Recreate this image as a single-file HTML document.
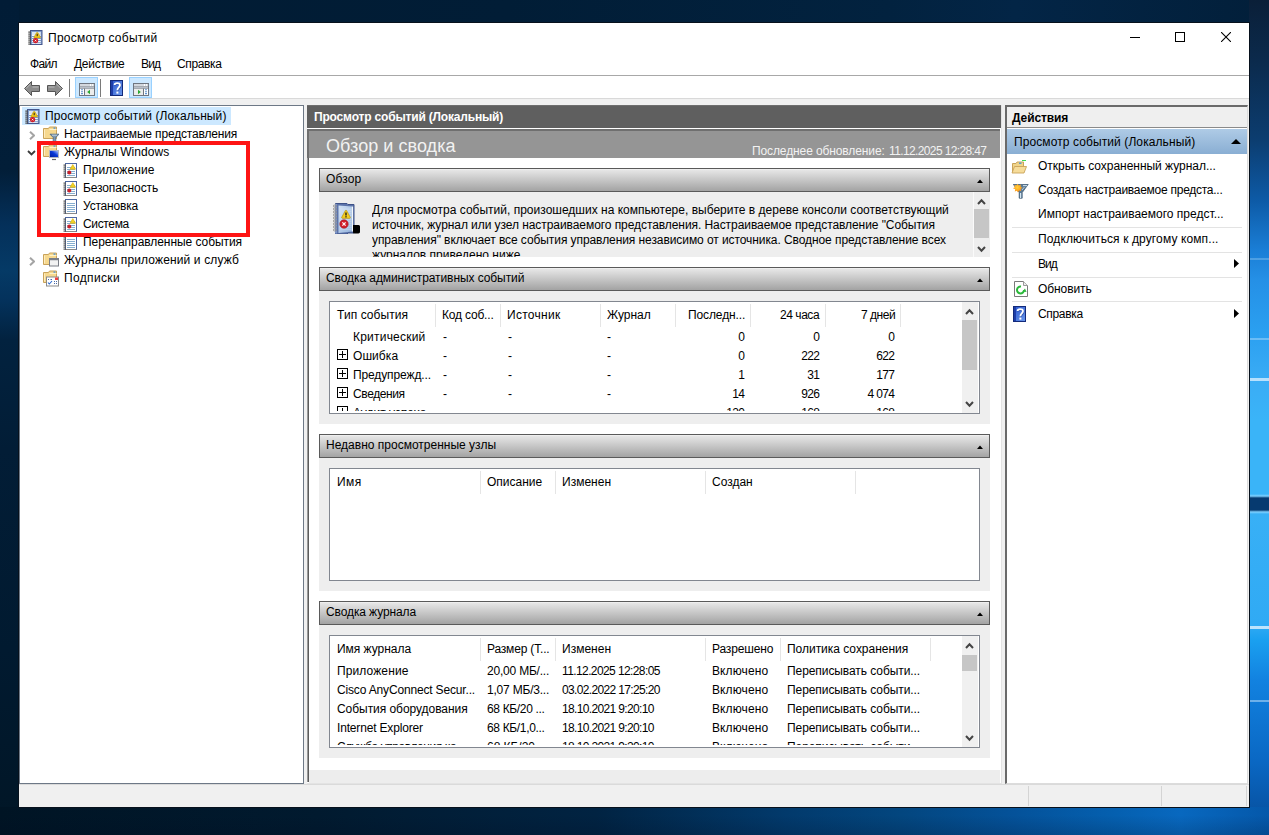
<!DOCTYPE html>
<html><head><meta charset="utf-8"><style>
*{box-sizing:border-box}
html,body{margin:0;padding:0;width:1269px;height:835px;overflow:hidden}
body{position:relative;font-family:"Liberation Sans",sans-serif;font-size:12px;color:#000;background:#021a31}
.a{position:absolute}
.t{position:absolute;white-space:nowrap;line-height:15px;font-size:12px}
.b{font-weight:bold}
.r{text-align:right}
.sh{left:319px;width:671px;height:24px;border:1px solid #5a5a5a;background:linear-gradient(180deg,#f7f7f7 0px,#e6e6e6 1px,#a3a3a3 100%)}
.sc{left:319px;width:671px;background:#eeeeee}
.lb{left:329px;width:651px;background:#fff;border:1px solid #828790}
.cs{width:1px;height:23px;background:#e5e5e5}
</style></head><body>
<div class="a" style="left:0;top:0;width:1269px;height:835px;background:linear-gradient(90deg,#011b33 0%,#011d36 40%,#02223f 70%,#032546 80%,#021f3a 100%)"></div>
<div class="a" style="left:0;top:0;width:19px;height:835px;background:linear-gradient(180deg,#011c36 0px,#021e38 170px,#04305a 225px,#053a66 270px,#04325c 300px,#02223f 340px,#021d36 450px,#011a30 650px,#011626 835px)"></div>
<div class="a" style="left:1249px;top:0;width:20px;height:835px;background:linear-gradient(180deg,#0a1f38 0px,#0b2a4c 60px,#0c3d70 140px,#0d5aa6 200px,#1a7ed6 250px,#2590e6 280px,#2a9ff0 330px,#3aacf5 380px,#3ab4f8 420px,#3ab4f8 494px,#7fd0ff 496px,#063a70 498px,#063a70 510px,#7fd0ff 512px,#38b0f6 514px,#30aaf4 625px,#1aa0f0 640px,#1282e0 680px,#0a68c4 760px,#064a96 835px)"></div>
<div class="a" style="left:1250px;top:338px;width:19px;height:2px;background:rgba(225,242,255,0.35)"></div>
<div class="a" style="left:1250px;top:378px;width:19px;height:3px;background:rgba(225,242,255,0.75)"></div>
<div class="a" style="left:1250px;top:626px;width:19px;height:3px;background:rgba(225,242,255,0.8)"></div>
<div class="a" style="left:1250px;top:700px;width:19px;height:2px;background:rgba(225,242,255,0.45)"></div>
<div class="a" style="left:1250px;top:258px;width:19px;height:2px;background:rgba(225,242,255,0.25)"></div>
<div class="a" style="left:0;top:807px;width:1269px;height:28px;background:linear-gradient(180deg,rgba(0,0,0,0) 30%,rgba(0,10,30,0.18) 100%),linear-gradient(90deg,#001424 0%,#011a2f 25%,#012342 47%,#023a6c 62%,#03467f 71%,#04529a 80%,#0560b0 88%,#0868bf 93%,#0558aa 100%)"></div>
<div class="a" style="left:18px;top:22px;width:1232px;height:786px;background:#fff;border:1px solid #07111c"></div>
<svg class="a" style="left:28px;top:30px" width="16" height="16" viewBox="0 0 16 16"><rect x="2.5" y="0.5" width="11.5" height="14" fill="#7e9ccc" stroke="#46588e"/><rect x="4" y="2" width="8.8" height="3" fill="#dce6f2"/><path d="M4 5.5H12.8" stroke="#f4f7fb" stroke-width="1"/><path d="M4 7.5H12.8" stroke="#f4f7fb" stroke-width="1"/><path d="M4 9.5H12.8" stroke="#f4f7fb" stroke-width="1"/><path d="M4 11.5H12.8" stroke="#f4f7fb" stroke-width="1"/><path d="M4 13.3H12.8" stroke="#f4f7fb" stroke-width="1"/><rect x="0.3" y="1.5" width="2.6" height="1.2" fill="#4a4a4a"/><rect x="0.3" y="3.5" width="2.6" height="1.2" fill="#4a4a4a"/><rect x="0.3" y="5.5" width="2.6" height="1.2" fill="#4a4a4a"/><rect x="0.3" y="7.5" width="2.6" height="1.2" fill="#4a4a4a"/><rect x="0.3" y="9.5" width="2.6" height="1.2" fill="#4a4a4a"/><rect x="0.3" y="11.5" width="2.6" height="1.2" fill="#4a4a4a"/><rect x="0.3" y="13.5" width="2.6" height="1.2" fill="#4a4a4a"/><path d="M9.2 2.2C9.5 2.2 9.7 2.4 9.9 2.7L12.5 7.2C12.7 7.6 12.5 7.9 12.1 7.9H6.3C5.9 7.9 5.7 7.6 5.9 7.2L8.5 2.7C8.7 2.4 8.9 2.2 9.2 2.2Z" fill="#f0c41a" stroke="#b58f00" stroke-width="0.5"/><path d="M9.2 3.8V6.2" stroke="#222" stroke-width="1"/><circle cx="7.6" cy="10.6" r="2.6" fill="#d01c28"/><path d="M6.8 9.8L8.4 11.4M8.4 9.8L6.8 11.4" stroke="#fff" stroke-width="0.8"/></svg>
<div class="t" style="left:48px;top:31px;;letter-spacing:0.257px">Просмотр событий</div>
<div class="a" style="left:1130px;top:37px;width:10px;height:1px;background:#000"></div>
<div class="a" style="left:1175px;top:32px;width:10px;height:10px;border:1px solid #000"></div>
<svg class="a" style="left:1221px;top:32px" width="10" height="10" viewBox="0 0 10 10"><path d="M0 0L10 10M10 0L0 10" stroke="#000" stroke-width="1.1"/></svg>
<div class="t" style="left:30px;top:57px;;letter-spacing:-0.667px">Файл</div>
<div class="t" style="left:74px;top:57px;;letter-spacing:-0.283px">Действие</div>
<div class="t" style="left:141px;top:57px;;letter-spacing:-0.854px">Вид</div>
<div class="t" style="left:177px;top:57px;;letter-spacing:-0.367px">Справка</div>
<div class="a" style="left:19px;top:75px;width:1230px;height:1px;background:#a8a8a8"></div>
<svg class="a" style="left:23px;top:80px" width="18" height="17" viewBox="0 0 18 17"><path d="M1.5 8.5L8.5 1.5V5.5H16.5V11.5H8.5V15.5Z" fill="#8c8c8c" stroke="#555" stroke-width="1" stroke-linejoin="round"/><path d="M3 8.5L7.5 4M9.5 7H15.5" stroke="#c8c8c8" stroke-width="0.8"/></svg>
<svg class="a" style="left:46px;top:80px" width="18" height="17" viewBox="0 0 18 17"><path d="M16.5 8.5L9.5 1.5V5.5H1.5V11.5H9.5V15.5Z" fill="#8c8c8c" stroke="#555" stroke-width="1" stroke-linejoin="round"/><path d="M15 8.5L10.5 4M2.5 7H8.5" stroke="#c8c8c8" stroke-width="0.8"/></svg>
<div class="a" style="left:69px;top:79px;width:1px;height:18px;background:#7a7a7a"></div>
<div class="a" style="left:75px;top:77px;width:23px;height:21px;background:#cce8ff;border:1px solid #99d1ff"></div>
<svg class="a" style="left:79px;top:83px" width="16" height="13" viewBox="0 0 16 13"><rect x="0.5" y="0.5" width="15" height="12" fill="#fff" stroke="#6f7680"/><path d="M1 2H11" stroke="#b8bec8" stroke-width="1.2"/><rect x="12" y="1.4" width="1.2" height="1.2" fill="#b8bec8"/><rect x="14" y="1.4" width="1.2" height="1.2" fill="#b8bec8"/><path d="M1 4.5H15" stroke="#b8bec8" stroke-width="1.2"/><path d="M0.5 3.5H15.5M0.5 5.5H15.5" stroke="#6f7680" stroke-width="0.6"/><path d="M5.5 5.5V12.5" stroke="#6f7680"/><path d="M2.2 6.8H3.8" stroke="#3a78c0" stroke-width="1.1"/><path d="M2.2 8.7H3.8" stroke="#3a78c0" stroke-width="1.1"/><path d="M2.2 10.6H3.8" stroke="#3a78c0" stroke-width="1.1"/><rect x="6" y="6" width="9" height="6" fill="#ececec"/><path d="M8.2 9L11 6.8V11.2Z" fill="#2aa830"/></svg>
<div class="a" style="left:100px;top:79px;width:1px;height:18px;background:#7a7a7a"></div>
<svg class="a" style="left:110px;top:80px" width="13" height="16" viewBox="0 0 13 16"><defs><linearGradient id="h1" x1="0" y1="0" x2="1" y2="1"><stop offset="0" stop-color="#2a56cc"/><stop offset="1" stop-color="#6a98ec"/></linearGradient></defs><rect x="0.5" y="0.5" width="12" height="15" fill="url(#h1)" stroke="#132a7a"/><rect x="1" y="1" width="2" height="14" fill="#1d3da8"/><path d="M4.6 5C4.6 2.4 10 2.3 10 5.1C10 7.3 7.4 7.6 7.4 10.2" stroke="#1a2a70" stroke-width="1.8" fill="none" opacity="0.5" transform="translate(0.6,0.6)"/><path d="M4.6 5C4.6 2.4 10 2.3 10 5.1C10 7.3 7.4 7.6 7.4 10.2" stroke="#fff" stroke-width="1.8" fill="none"/><rect x="6.4" y="11.6" width="2" height="2" fill="#fff"/></svg>
<div class="a" style="left:129px;top:77px;width:23px;height:21px;background:#cce8ff;border:1px solid #99d1ff"></div>
<svg class="a" style="left:133px;top:83px" width="16" height="13" viewBox="0 0 16 13"><rect x="0.5" y="0.5" width="15" height="12" fill="#fff" stroke="#6f7680"/><path d="M1 2H11" stroke="#b8bec8" stroke-width="1.2"/><rect x="12" y="1.4" width="1.2" height="1.2" fill="#b8bec8"/><rect x="14" y="1.4" width="1.2" height="1.2" fill="#b8bec8"/><path d="M1 4.5H15" stroke="#b8bec8" stroke-width="1.2"/><path d="M0.5 3.5H15.5M0.5 5.5H15.5" stroke="#6f7680" stroke-width="0.6"/><path d="M10.5 5.5V12.5" stroke="#6f7680"/><path d="M12.2 6.8H13.8" stroke="#3a78c0" stroke-width="1.1"/><path d="M12.2 8.7H13.8" stroke="#3a78c0" stroke-width="1.1"/><path d="M12.2 10.6H13.8" stroke="#3a78c0" stroke-width="1.1"/><rect x="1" y="6" width="9" height="6" fill="#ececec"/><path d="M7.8 9L5 6.8V11.2Z" fill="#2aa830"/></svg>
<div class="a" style="left:19px;top:98px;width:1230px;height:1px;background:#d9d9d9"></div>
<div class="a" style="left:19px;top:99px;width:1230px;height:685px;background:#f0f0f0"></div>
<div class="a" style="left:19px;top:105px;width:285px;height:679px;background:#fff;border:1px solid #6d7886"></div>
<div class="a" style="left:22px;top:107px;width:209px;height:18px;background:#cce8ff"></div>
<div class="t" style="left:45px;top:109px;;letter-spacing:0.103px">Просмотр событий (Локальный)</div>
<svg class="a" style="left:25px;top:109px" width="16" height="16" viewBox="0 0 16 16"><rect x="2.5" y="0.5" width="11.5" height="14" fill="#7e9ccc" stroke="#46588e"/><rect x="4" y="2" width="8.8" height="3" fill="#dce6f2"/><path d="M4 5.5H12.8" stroke="#f4f7fb" stroke-width="1"/><path d="M4 7.5H12.8" stroke="#f4f7fb" stroke-width="1"/><path d="M4 9.5H12.8" stroke="#f4f7fb" stroke-width="1"/><path d="M4 11.5H12.8" stroke="#f4f7fb" stroke-width="1"/><path d="M4 13.3H12.8" stroke="#f4f7fb" stroke-width="1"/><rect x="0.3" y="1.5" width="2.6" height="1.2" fill="#4a4a4a"/><rect x="0.3" y="3.5" width="2.6" height="1.2" fill="#4a4a4a"/><rect x="0.3" y="5.5" width="2.6" height="1.2" fill="#4a4a4a"/><rect x="0.3" y="7.5" width="2.6" height="1.2" fill="#4a4a4a"/><rect x="0.3" y="9.5" width="2.6" height="1.2" fill="#4a4a4a"/><rect x="0.3" y="11.5" width="2.6" height="1.2" fill="#4a4a4a"/><rect x="0.3" y="13.5" width="2.6" height="1.2" fill="#4a4a4a"/><path d="M9.2 2.2C9.5 2.2 9.7 2.4 9.9 2.7L12.5 7.2C12.7 7.6 12.5 7.9 12.1 7.9H6.3C5.9 7.9 5.7 7.6 5.9 7.2L8.5 2.7C8.7 2.4 8.9 2.2 9.2 2.2Z" fill="#f0c41a" stroke="#b58f00" stroke-width="0.5"/><path d="M9.2 3.8V6.2" stroke="#222" stroke-width="1"/><circle cx="7.6" cy="10.6" r="2.6" fill="#d01c28"/><path d="M6.8 9.8L8.4 11.4M8.4 9.8L6.8 11.4" stroke="#fff" stroke-width="0.8"/></svg>
<div class="t" style="left:64px;top:127px;;letter-spacing:-0.165px">Настраиваемые представления</div>
<svg class="a" style="left:29px;top:131px" width="6" height="9" viewBox="0 0 6 9"><path d="M1 0.8L5 4.5L1 8.2" stroke="#a4a4a4" stroke-width="2" fill="none"/></svg>
<svg class="a" style="left:43px;top:126px" width="16" height="17" viewBox="0 0 16 17"><path d="M0.5 2.5H5.5L6.5 1H13.5V12.5H0.5Z" fill="#f6d88e" stroke="#c9a35a"/><path d="M1.5 3.5V11.5" stroke="#fdecc0" stroke-width="1"/><path d="M6.5 3.5H13.5" stroke="#fff2c8"/><rect x="10.5" y="1.5" width="2" height="1.2" fill="#3d8ee0"/><path d="M7 8.2H16L12.8 11.5V15.5H10.2V11.5Z" fill="#7e98b0" stroke="#4a6684" stroke-width="0.8"/><path d="M9 9.2H14" stroke="#d0e0ee" stroke-width="0.8"/></svg>
<div class="t" style="left:64px;top:145px;;letter-spacing:0.055px">Журналы Windows</div>
<svg class="a" style="left:27px;top:150px" width="9" height="6" viewBox="0 0 9 6"><path d="M1 1L4.5 4.5L8 1" stroke="#3c3c3c" stroke-width="1.8" fill="none"/></svg>
<svg class="a" style="left:43px;top:144px" width="16" height="17" viewBox="0 0 16 17"><path d="M0.5 2.5H5.5L6.5 1H13.5V12.5H0.5Z" fill="#f6d88e" stroke="#c9a35a"/><path d="M1.5 3.5V11.5" stroke="#fdecc0" stroke-width="1"/><path d="M6.5 3.5H13.5" stroke="#fff2c8"/><rect x="10.5" y="1.5" width="2" height="1.2" fill="#3d8ee0"/><defs><linearGradient id="scr" x1="0" y1="1" x2="1" y2="0"><stop offset="0" stop-color="#001a9a"/><stop offset="0.55" stop-color="#0a3ad8"/><stop offset="1" stop-color="#c4d8ff"/></linearGradient></defs><rect x="6.5" y="6.5" width="9" height="7" fill="url(#scr)" stroke="#b4b8c0"/><path d="M9 15.5H13" stroke="#666" stroke-width="1.2"/></svg>
<div class="t" style="left:83px;top:163px;;letter-spacing:0.121px">Приложение</div>
<svg class="a" style="left:63px;top:163px" width="15" height="16" viewBox="0 0 15 16"><rect x="2.5" y="0.5" width="11" height="14" fill="#fff" stroke="#4d68a3"/><path d="M2.5 14.5H13.5" stroke="#8a8a8a"/><path d="M4 4.5H12" stroke="#86aed0"/><path d="M4 6.5H12" stroke="#86aed0"/><path d="M4 8.5H12" stroke="#86aed0"/><path d="M4 10.5H12" stroke="#86aed0"/><path d="M4 12.5H12" stroke="#86aed0"/><rect x="0.5" y="1.5" width="2.5" height="1.2" fill="#555"/><rect x="0.5" y="3.5" width="2.5" height="1.2" fill="#555"/><rect x="0.5" y="5.5" width="2.5" height="1.2" fill="#555"/><rect x="0.5" y="7.5" width="2.5" height="1.2" fill="#555"/><rect x="0.5" y="9.5" width="2.5" height="1.2" fill="#555"/><rect x="0.5" y="11.5" width="2.5" height="1.2" fill="#555"/><rect x="0.5" y="13.5" width="2.5" height="1.2" fill="#555"/><path d="M9.8 1.6L12.6 6.2H7Z" fill="#f2d22a" stroke="#d9b000" stroke-width="0.6"/><circle cx="6.3" cy="9.4" r="2" fill="#c8202a"/></svg>
<div class="t" style="left:83px;top:181px;;letter-spacing:-0.127px">Безопасность</div>
<svg class="a" style="left:63px;top:181px" width="15" height="16" viewBox="0 0 15 16"><rect x="2.5" y="0.5" width="11" height="14" fill="#fff" stroke="#4d68a3"/><path d="M2.5 14.5H13.5" stroke="#8a8a8a"/><path d="M4 4.5H12" stroke="#86aed0"/><path d="M4 6.5H12" stroke="#86aed0"/><path d="M4 8.5H12" stroke="#86aed0"/><path d="M4 10.5H12" stroke="#86aed0"/><path d="M4 12.5H12" stroke="#86aed0"/><rect x="0.5" y="1.5" width="2.5" height="1.2" fill="#555"/><rect x="0.5" y="3.5" width="2.5" height="1.2" fill="#555"/><rect x="0.5" y="5.5" width="2.5" height="1.2" fill="#555"/><rect x="0.5" y="7.5" width="2.5" height="1.2" fill="#555"/><rect x="0.5" y="9.5" width="2.5" height="1.2" fill="#555"/><rect x="0.5" y="11.5" width="2.5" height="1.2" fill="#555"/><rect x="0.5" y="13.5" width="2.5" height="1.2" fill="#555"/><path d="M9.8 1.6L12.6 6.2H7Z" fill="#f2d22a" stroke="#d9b000" stroke-width="0.6"/><circle cx="6.3" cy="9.4" r="2" fill="#c8202a"/></svg>
<div class="t" style="left:83px;top:199px;;letter-spacing:-0.193px">Установка</div>
<svg class="a" style="left:63px;top:199px" width="15" height="16" viewBox="0 0 15 16"><rect x="2.5" y="0.5" width="11" height="14" fill="#fff" stroke="#4d68a3"/><path d="M2.5 14.5H13.5" stroke="#8a8a8a"/><path d="M4 4.5H12" stroke="#86aed0"/><path d="M4 6.5H12" stroke="#86aed0"/><path d="M4 8.5H12" stroke="#86aed0"/><path d="M4 10.5H12" stroke="#86aed0"/><path d="M4 12.5H12" stroke="#86aed0"/><rect x="0.5" y="1.5" width="2.5" height="1.2" fill="#555"/><rect x="0.5" y="3.5" width="2.5" height="1.2" fill="#555"/><rect x="0.5" y="5.5" width="2.5" height="1.2" fill="#555"/><rect x="0.5" y="7.5" width="2.5" height="1.2" fill="#555"/><rect x="0.5" y="9.5" width="2.5" height="1.2" fill="#555"/><rect x="0.5" y="11.5" width="2.5" height="1.2" fill="#555"/><rect x="0.5" y="13.5" width="2.5" height="1.2" fill="#555"/></svg>
<div class="t" style="left:83px;top:217px;;letter-spacing:-0.342px">Система</div>
<svg class="a" style="left:63px;top:217px" width="15" height="16" viewBox="0 0 15 16"><rect x="2.5" y="0.5" width="11" height="14" fill="#fff" stroke="#4d68a3"/><path d="M2.5 14.5H13.5" stroke="#8a8a8a"/><path d="M4 4.5H12" stroke="#86aed0"/><path d="M4 6.5H12" stroke="#86aed0"/><path d="M4 8.5H12" stroke="#86aed0"/><path d="M4 10.5H12" stroke="#86aed0"/><path d="M4 12.5H12" stroke="#86aed0"/><rect x="0.5" y="1.5" width="2.5" height="1.2" fill="#555"/><rect x="0.5" y="3.5" width="2.5" height="1.2" fill="#555"/><rect x="0.5" y="5.5" width="2.5" height="1.2" fill="#555"/><rect x="0.5" y="7.5" width="2.5" height="1.2" fill="#555"/><rect x="0.5" y="9.5" width="2.5" height="1.2" fill="#555"/><rect x="0.5" y="11.5" width="2.5" height="1.2" fill="#555"/><rect x="0.5" y="13.5" width="2.5" height="1.2" fill="#555"/><path d="M9.8 1.6L12.6 6.2H7Z" fill="#f2d22a" stroke="#d9b000" stroke-width="0.6"/><circle cx="6.3" cy="9.4" r="2" fill="#c8202a"/></svg>
<div class="t" style="left:83px;top:235px;;letter-spacing:-0.059px">Перенаправленные события</div>
<svg class="a" style="left:63px;top:235px" width="15" height="16" viewBox="0 0 15 16"><rect x="2.5" y="0.5" width="11" height="14" fill="#fff" stroke="#4d68a3"/><path d="M2.5 14.5H13.5" stroke="#8a8a8a"/><path d="M4 4.5H12" stroke="#86aed0"/><path d="M4 6.5H12" stroke="#86aed0"/><path d="M4 8.5H12" stroke="#86aed0"/><path d="M4 10.5H12" stroke="#86aed0"/><path d="M4 12.5H12" stroke="#86aed0"/><rect x="0.5" y="1.5" width="2.5" height="1.2" fill="#555"/><rect x="0.5" y="3.5" width="2.5" height="1.2" fill="#555"/><rect x="0.5" y="5.5" width="2.5" height="1.2" fill="#555"/><rect x="0.5" y="7.5" width="2.5" height="1.2" fill="#555"/><rect x="0.5" y="9.5" width="2.5" height="1.2" fill="#555"/><rect x="0.5" y="11.5" width="2.5" height="1.2" fill="#555"/><rect x="0.5" y="13.5" width="2.5" height="1.2" fill="#555"/></svg>
<div class="t" style="left:64px;top:253px;;letter-spacing:0.132px">Журналы приложений и служб</div>
<svg class="a" style="left:29px;top:257px" width="6" height="9" viewBox="0 0 6 9"><path d="M1 0.8L5 4.5L1 8.2" stroke="#a4a4a4" stroke-width="2" fill="none"/></svg>
<svg class="a" style="left:43px;top:252px" width="16" height="17" viewBox="0 0 16 17"><path d="M0.5 2.5H5.5L6.5 1H13.5V12.5H0.5Z" fill="#f6d88e" stroke="#c9a35a"/><path d="M1.5 3.5V11.5" stroke="#fdecc0" stroke-width="1"/><path d="M6.5 3.5H13.5" stroke="#fff2c8"/><rect x="10.5" y="1.5" width="2" height="1.2" fill="#3d8ee0"/><rect x="6.5" y="6.5" width="9" height="7.5" fill="#f2f2f2" stroke="#7a7e86"/><path d="M6.5 7.5H15.5" stroke="#7a7e86" stroke-width="1.5"/></svg>
<div class="t" style="left:64px;top:271px;;letter-spacing:0.345px">Подписки</div>
<svg class="a" style="left:43px;top:270px" width="16" height="17" viewBox="0 0 16 17"><path d="M0.5 2.5H5.5L6.5 1H13.5V12.5H0.5Z" fill="#f6d88e" stroke="#c9a35a"/><path d="M1.5 3.5V11.5" stroke="#fdecc0" stroke-width="1"/><path d="M6.5 3.5H13.5" stroke="#fff2c8"/><rect x="10.5" y="1.5" width="2" height="1.2" fill="#3d8ee0"/><rect x="3.5" y="7" width="12" height="9" fill="#fff" stroke="#8a8a8a"/><rect x="12" y="7.5" width="3" height="2.5" fill="#f04040"/><path d="M5 9.5H6M7.5 9.5H9M11 11.5H12M13 11.5H14M11 13.5H12M13 13.5H14" stroke="#4a6aa8" stroke-width="1"/><path d="M5 12.5L6.3 14L9 11" stroke="#2a6ad0" stroke-width="1.1" fill="none"/></svg>
<div class="a" style="left:37px;top:141px;width:213px;height:96px;border:4px solid #fe1414"></div>
<div class="a" style="left:307px;top:105px;width:695px;height:679px;background:#fff;border-bottom:1px solid #e3e3e3;border-right:1px solid #e3e3e3"></div>
<div class="a" style="left:307px;top:129px;width:2px;height:653px;background:#5c5c5c;border-left:1px solid #9a9a9a"></div>
<div class="a" style="left:307px;top:105px;width:694px;height:23px;background:#5f5f5f;border-top:1px solid #6e6e6e"></div>
<div class="t" style="left:314px;top:110px;color:#fff;font-weight:bold;letter-spacing:-0.175px">Просмотр событий (Локальный)</div>
<div class="a" style="left:307px;top:129px;width:693px;height:29px;background:#959595;border-top:2px solid #6f6f6f;border-left:2px solid #6f6f6f"></div>
<div class="t" style="left:326px;top:135px;font-size:18px;line-height:22px;color:#f2f2f2;letter-spacing:0.054px">Обзор и сводка</div>
<div class="t" style="left:752px;top:144px;color:#f2f2f2;letter-spacing:-0.107px">Последнее обновление:</div>
<div class="t" style="left:889px;top:144px;color:#f2f2f2;letter-spacing:-0.624px">11.12.2025 12:28:47</div>
<div class="a" style="left:309px;top:770px;width:691px;height:13px;background:#ededed"></div>
<div class="a sh" style="top:168px"></div>
<div class="t" style="left:326px;top:172px;;letter-spacing:0.129px">Обзор</div>
<svg class="a" style="left:977px;top:179px" width="6" height="4" viewBox="0 0 6 4"><path d="M0 4L3 0.5L6 4Z" fill="#000"/></svg>
<div class="a sc" style="top:192px;height:65px"></div>
<svg class="a" style="left:333px;top:203px" width="28" height="31" viewBox="0 0 28 31"><defs><linearGradient id="pg" x1="0" y1="0" x2="1" y2="1"><stop offset="0" stop-color="#d2e2f4"/><stop offset="1" stop-color="#93b2dc"/></linearGradient></defs><path d="M2.5 0.5H14L15 1.5H21V30H15L14 31H2.5Z" fill="#5b73aa" stroke="#3e5288" stroke-width="1"/><path d="M5.5 2.5L19 3.5V28.5L5.5 30Z" fill="url(#pg)"/><path d="M19.5 3.5V28.5" stroke="#f4f8fc" stroke-width="1.2"/><path d="M7 6L18.5 6.2" stroke="#e4eef9" stroke-width="0.7" opacity="0.8"/><path d="M7 8L18.5 8.2" stroke="#e4eef9" stroke-width="0.7" opacity="0.8"/><path d="M7 10L18.5 10.2" stroke="#e4eef9" stroke-width="0.7" opacity="0.8"/><path d="M7 12L18.5 12.2" stroke="#e4eef9" stroke-width="0.7" opacity="0.8"/><path d="M7 14L18.5 14.2" stroke="#e4eef9" stroke-width="0.7" opacity="0.8"/><path d="M7 16L18.5 16.2" stroke="#e4eef9" stroke-width="0.7" opacity="0.8"/><path d="M7 18L18.5 18.2" stroke="#e4eef9" stroke-width="0.7" opacity="0.8"/><path d="M7 20L18.5 20.2" stroke="#e4eef9" stroke-width="0.7" opacity="0.8"/><path d="M7 22L18.5 22.2" stroke="#e4eef9" stroke-width="0.7" opacity="0.8"/><path d="M7 24L18.5 24.2" stroke="#e4eef9" stroke-width="0.7" opacity="0.8"/><path d="M7 26L18.5 26.2" stroke="#e4eef9" stroke-width="0.7" opacity="0.8"/><path d="M3 1V30.5" stroke="#7d95c8" stroke-width="2"/><ellipse cx="2" cy="3" rx="1.8" ry="1" fill="none" stroke="#8a8a8a" stroke-width="0.8"/><ellipse cx="2" cy="6" rx="1.8" ry="1" fill="none" stroke="#8a8a8a" stroke-width="0.8"/><ellipse cx="2" cy="9" rx="1.8" ry="1" fill="none" stroke="#8a8a8a" stroke-width="0.8"/><ellipse cx="2" cy="12" rx="1.8" ry="1" fill="none" stroke="#8a8a8a" stroke-width="0.8"/><ellipse cx="2" cy="15" rx="1.8" ry="1" fill="none" stroke="#8a8a8a" stroke-width="0.8"/><ellipse cx="2" cy="18" rx="1.8" ry="1" fill="none" stroke="#8a8a8a" stroke-width="0.8"/><ellipse cx="2" cy="21" rx="1.8" ry="1" fill="none" stroke="#8a8a8a" stroke-width="0.8"/><ellipse cx="2" cy="24" rx="1.8" ry="1" fill="none" stroke="#8a8a8a" stroke-width="0.8"/><ellipse cx="2" cy="27" rx="1.8" ry="1" fill="none" stroke="#8a8a8a" stroke-width="0.8"/><path d="M13 7.2C13.4 7.2 13.6 7.5 13.8 7.9L17.2 14.2C17.5 14.8 17.2 15.3 16.6 15.3H9.4C8.8 15.3 8.5 14.8 8.8 14.2L12.2 7.9C12.4 7.5 12.6 7.2 13 7.2Z" fill="#f5cd1f" stroke="#b89000" stroke-width="0.7"/><path d="M13 9.5V12.6" stroke="#111" stroke-width="1.3"/><rect x="12.35" y="13.2" width="1.3" height="1.2" fill="#111"/><circle cx="11" cy="21" r="4.2" fill="#d21f2c" stroke="#a01018" stroke-width="0.6"/><path d="M9.4 19.4L12.6 22.6M12.6 19.4L9.4 22.6" stroke="#fff" stroke-width="1.2"/><path d="M20 22H25.5C26.5 22 27 22.8 27 23.6V28.8C27 29.8 26.3 30.5 25.4 30.5H21.5C20.6 30.5 20 29.8 20 28.9Z" fill="#000"/></svg>
<div class="a" style="left:372px;top:203px;width:600px;height:54px;overflow:hidden">
<div class="t" style="left:0px;top:0px;;letter-spacing:0.007px">Для просмотра событий, произошедших на компьютере, выберите в дереве консоли соответствующий</div>
<div class="t" style="left:0px;top:15px;;letter-spacing:-0.070px">источник, журнал или узел настраиваемого представления. Настраиваемое представление &quot;События</div>
<div class="t" style="left:0px;top:30px;;letter-spacing:-0.078px">управления&quot; включает все события управления независимо от источника. Сводное представление всех</div>
<div class="t" style="left:0px;top:45px;">журналов приведено ниже.</div>
</div>
<div class="a" style="left:973px;top:192px;width:1px;height:65px;background:#fafafa"></div>
<div class="a" style="left:974px;top:192px;width:16px;height:65px;background:#eeeeee"></div>
<div class="a" style="left:974px;top:209px;width:15px;height:29px;background:#c6c6c6"></div>
<svg class="a" style="left:977px;top:198px" width="9" height="7" viewBox="0 0 9 7"><path d="M1 6L4.5 2.2L8 6" stroke="#454545" stroke-width="2" fill="none"/></svg>
<svg class="a" style="left:977px;top:246px" width="9" height="7" viewBox="0 0 9 7"><path d="M1 1L4.5 4.8L8 1" stroke="#454545" stroke-width="2" fill="none"/></svg>
<div class="a sh" style="top:267px"></div>
<div class="t" style="left:326px;top:271px;;letter-spacing:-0.078px">Сводка административных событий</div>
<svg class="a" style="left:977px;top:278px" width="6" height="4" viewBox="0 0 6 4"><path d="M0 4L3 0.5L6 4Z" fill="#000"/></svg>
<div class="a sc" style="top:291px;height:133px"></div>
<div class="a lb" style="top:301px;height:113px"></div>
<div class="a cs" style="left:435px;top:304px"></div>
<div class="a cs" style="left:500px;top:304px"></div>
<div class="a cs" style="left:600px;top:304px"></div>
<div class="a cs" style="left:675px;top:304px"></div>
<div class="a cs" style="left:750px;top:304px"></div>
<div class="a cs" style="left:825px;top:304px"></div>
<div class="a cs" style="left:900px;top:304px"></div>
<div class="t" style="left:337px;top:308px;;letter-spacing:0.076px">Тип события</div>
<div class="t" style="left:442px;top:308px;;letter-spacing:-0.187px">Код соб...</div>
<div class="t" style="left:507px;top:308px;;letter-spacing:0.289px">Источник</div>
<div class="t" style="left:607px;top:308px;;letter-spacing:0.003px">Журнал</div>
<div class="t" style="left:688px;top:308px;;letter-spacing:-0.112px">Последн...</div>
<div class="t" style="left:780px;top:308px;;letter-spacing:-0.451px">24 часа</div>
<div class="t" style="left:861px;top:308px;;letter-spacing:-0.462px">7 дней</div>
<div class="a" style="left:330px;top:327px;width:631px;height:84px;overflow:hidden">
<div class="t" style="left:23px;top:3px;;letter-spacing:0.215px">Критический</div>
<div class="t" style="left:113px;top:3px;">-</div>
<div class="t" style="left:178px;top:3px;">-</div>
<div class="t" style="left:277px;top:3px;">-</div>
<div class="t" style="left:315px;top:3px;width:100px;text-align:right;letter-spacing:-0.6px;padding-right:0.6px">0</div>
<div class="t" style="left:390px;top:3px;width:100px;text-align:right;letter-spacing:-0.6px;padding-right:0.6px">0</div>
<div class="t" style="left:465px;top:3px;width:100px;text-align:right;letter-spacing:-0.6px;padding-right:0.6px">0</div>
<svg class="a" style="left:7px;top:22px" width="11" height="11" viewBox="0 0 11 11"><rect x="0.5" y="0.5" width="10" height="10" fill="none" stroke="#000"/><path d="M2 5.5H9M5.5 2V9" stroke="#000"/></svg>
<div class="t" style="left:23px;top:22px;;letter-spacing:0.070px">Ошибка</div>
<div class="t" style="left:113px;top:22px;">-</div>
<div class="t" style="left:178px;top:22px;">-</div>
<div class="t" style="left:277px;top:22px;">-</div>
<div class="t" style="left:315px;top:22px;width:100px;text-align:right;letter-spacing:-0.6px;padding-right:0.6px">0</div>
<div class="t" style="left:390px;top:22px;width:100px;text-align:right;letter-spacing:-0.6px;padding-right:0.6px">222</div>
<div class="t" style="left:465px;top:22px;width:100px;text-align:right;letter-spacing:-0.6px;padding-right:0.6px">622</div>
<svg class="a" style="left:7px;top:41px" width="11" height="11" viewBox="0 0 11 11"><rect x="0.5" y="0.5" width="10" height="10" fill="none" stroke="#000"/><path d="M2 5.5H9M5.5 2V9" stroke="#000"/></svg>
<div class="t" style="left:23px;top:41px;;letter-spacing:-0.118px">Предупрежд...</div>
<div class="t" style="left:113px;top:41px;">-</div>
<div class="t" style="left:178px;top:41px;">-</div>
<div class="t" style="left:277px;top:41px;">-</div>
<div class="t" style="left:315px;top:41px;width:100px;text-align:right;letter-spacing:-0.6px;padding-right:0.6px">1</div>
<div class="t" style="left:390px;top:41px;width:100px;text-align:right;letter-spacing:-0.6px;padding-right:0.6px">31</div>
<div class="t" style="left:465px;top:41px;width:100px;text-align:right;letter-spacing:-0.6px;padding-right:0.6px">177</div>
<svg class="a" style="left:7px;top:60px" width="11" height="11" viewBox="0 0 11 11"><rect x="0.5" y="0.5" width="10" height="10" fill="none" stroke="#000"/><path d="M2 5.5H9M5.5 2V9" stroke="#000"/></svg>
<div class="t" style="left:23px;top:60px;;letter-spacing:-0.389px">Сведения</div>
<div class="t" style="left:113px;top:60px;">-</div>
<div class="t" style="left:178px;top:60px;">-</div>
<div class="t" style="left:277px;top:60px;">-</div>
<div class="t" style="left:315px;top:60px;width:100px;text-align:right;letter-spacing:-0.6px;padding-right:0.6px">14</div>
<div class="t" style="left:390px;top:60px;width:100px;text-align:right;letter-spacing:-0.6px;padding-right:0.6px">926</div>
<div class="t" style="left:465px;top:60px;width:100px;text-align:right;letter-spacing:-0.6px;padding-right:0.6px">4 074</div>
<svg class="a" style="left:7px;top:79px" width="11" height="11" viewBox="0 0 11 11"><rect x="0.5" y="0.5" width="10" height="10" fill="none" stroke="#000"/><path d="M2 5.5H9M5.5 2V9" stroke="#000"/></svg>
<div class="t" style="left:23px;top:79px;">Аудит успеха</div>
<div class="t" style="left:113px;top:79px;">-</div>
<div class="t" style="left:178px;top:79px;">-</div>
<div class="t" style="left:277px;top:79px;">-</div>
<div class="t" style="left:315px;top:79px;width:100px;text-align:right;letter-spacing:-0.6px;padding-right:0.6px">120</div>
<div class="t" style="left:390px;top:79px;width:100px;text-align:right;letter-spacing:-0.6px;padding-right:0.6px">168</div>
<div class="t" style="left:465px;top:79px;width:100px;text-align:right;letter-spacing:-0.6px;padding-right:0.6px">168</div>
</div>
<div class="a" style="left:962px;top:302px;width:16px;height:111px;background:#f0f0f0"></div>
<div class="a" style="left:962px;top:320px;width:15px;height:50px;background:#c6c6c6"></div>
<svg class="a" style="left:965px;top:308px" width="9" height="7" viewBox="0 0 9 7"><path d="M1 6L4.5 2.2L8 6" stroke="#454545" stroke-width="2" fill="none"/></svg>
<svg class="a" style="left:965px;top:401px" width="9" height="7" viewBox="0 0 9 7"><path d="M1 1L4.5 4.8L8 1" stroke="#454545" stroke-width="2" fill="none"/></svg>
<div class="a sh" style="top:434px"></div>
<div class="t" style="left:326px;top:438px;;letter-spacing:0.005px">Недавно просмотренные узлы</div>
<svg class="a" style="left:977px;top:445px" width="6" height="4" viewBox="0 0 6 4"><path d="M0 4L3 0.5L6 4Z" fill="#000"/></svg>
<div class="a sc" style="top:458px;height:133px"></div>
<div class="a lb" style="top:468px;height:113px"></div>
<div class="a cs" style="left:480px;top:471px"></div>
<div class="a cs" style="left:555px;top:471px"></div>
<div class="a cs" style="left:705px;top:471px"></div>
<div class="a cs" style="left:855px;top:471px"></div>
<div class="t" style="left:337px;top:475px;;letter-spacing:0.412px">Имя</div>
<div class="t" style="left:487px;top:475px;">Описание</div>
<div class="t" style="left:562px;top:475px;;letter-spacing:0.008px">Изменен</div>
<div class="t" style="left:712px;top:475px;">Создан</div>
<div class="a sh" style="top:601px"></div>
<div class="t" style="left:326px;top:605px;;letter-spacing:-0.103px">Сводка журнала</div>
<svg class="a" style="left:977px;top:612px" width="6" height="4" viewBox="0 0 6 4"><path d="M0 4L3 0.5L6 4Z" fill="#000"/></svg>
<div class="a sc" style="top:625px;height:133px"></div>
<div class="a lb" style="top:635px;height:113px"></div>
<div class="a cs" style="left:480px;top:638px"></div>
<div class="a cs" style="left:555px;top:638px"></div>
<div class="a cs" style="left:705px;top:638px"></div>
<div class="a cs" style="left:780px;top:638px"></div>
<div class="a cs" style="left:930px;top:638px"></div>
<div class="t" style="left:337px;top:642px;;letter-spacing:-0.021px">Имя журнала</div>
<div class="t" style="left:487px;top:642px;;letter-spacing:-0.177px">Размер (Т...</div>
<div class="t" style="left:562px;top:642px;;letter-spacing:0.008px">Изменен</div>
<div class="t" style="left:712px;top:642px;;letter-spacing:-0.140px">Разрешено</div>
<div class="t" style="left:787px;top:642px;;letter-spacing:-0.023px">Политика сохранения</div>
<div class="a" style="left:330px;top:661px;width:631px;height:84px;overflow:hidden">
<div class="t" style="left:7px;top:3px;;letter-spacing:0.110px">Приложение</div>
<div class="t" style="left:157px;top:3px;;letter-spacing:-0.203px">20,00 МБ/...</div>
<div class="t" style="left:232px;top:3px;;letter-spacing:-0.602px">11.12.2025 12:28:05</div>
<div class="t" style="left:382px;top:3px;;letter-spacing:0.117px">Включено</div>
<div class="t" style="left:457px;top:3px;;letter-spacing:-0.075px">Переписывать событи...</div>
<div class="t" style="left:7px;top:22px;;letter-spacing:-0.163px">Cisco AnyConnect Secur...</div>
<div class="t" style="left:157px;top:22px;;letter-spacing:-0.203px">1,07 МБ/3...</div>
<div class="t" style="left:232px;top:22px;;letter-spacing:-0.652px">03.02.2022 17:25:20</div>
<div class="t" style="left:382px;top:22px;;letter-spacing:0.117px">Включено</div>
<div class="t" style="left:457px;top:22px;;letter-spacing:-0.075px">Переписывать событи...</div>
<div class="t" style="left:7px;top:41px;;letter-spacing:-0.050px">События оборудования</div>
<div class="t" style="left:157px;top:41px;;letter-spacing:-0.339px">68 КБ/20 ...</div>
<div class="t" style="left:232px;top:41px;;letter-spacing:-0.644px">18.10.2021 9:20:10</div>
<div class="t" style="left:382px;top:41px;;letter-spacing:0.117px">Включено</div>
<div class="t" style="left:457px;top:41px;;letter-spacing:-0.075px">Переписывать событи...</div>
<div class="t" style="left:7px;top:60px;;letter-spacing:-0.170px">Internet Explorer</div>
<div class="t" style="left:157px;top:60px;;letter-spacing:-0.339px">68 КБ/1,0...</div>
<div class="t" style="left:232px;top:60px;;letter-spacing:-0.644px">18.10.2021 9:20:10</div>
<div class="t" style="left:382px;top:60px;;letter-spacing:0.117px">Включено</div>
<div class="t" style="left:457px;top:60px;;letter-spacing:-0.075px">Переписывать событи...</div>
<div class="t" style="left:7px;top:79px;;letter-spacing:-0.419px">Служба управления ка...</div>
<div class="t" style="left:157px;top:79px;;letter-spacing:-0.040px">68 КБ/20...</div>
<div class="t" style="left:232px;top:79px;;letter-spacing:-0.644px">18.10.2021 9:20:10</div>
<div class="t" style="left:382px;top:79px;;letter-spacing:0.117px">Включено</div>
<div class="t" style="left:457px;top:79px;;letter-spacing:-0.075px">Переписывать событи...</div>
</div>
<div class="a" style="left:962px;top:636px;width:16px;height:111px;background:#f0f0f0"></div>
<div class="a" style="left:962px;top:655px;width:15px;height:16px;background:#c6c6c6"></div>
<svg class="a" style="left:965px;top:642px" width="9" height="7" viewBox="0 0 9 7"><path d="M1 6L4.5 2.2L8 6" stroke="#454545" stroke-width="2" fill="none"/></svg>
<svg class="a" style="left:965px;top:735px" width="9" height="7" viewBox="0 0 9 7"><path d="M1 1L4.5 4.8L8 1" stroke="#454545" stroke-width="2" fill="none"/></svg>
<div class="a" style="left:1005px;top:105px;width:243px;height:679px;background:#fff;border-left:2px solid #6a6a6a;border-top:2px solid #6a6a6a;border-right:1px solid #dcdcdc;border-bottom:1px solid #dcdcdc"></div>
<div class="a" style="left:1007px;top:107px;width:240px;height:21px;background:#efefef;border-bottom:1px solid #8a8a8a"></div>
<div class="t" style="left:1012px;top:111px;font-weight:bold;letter-spacing:-0.107px">Действия</div>
<div class="a" style="left:1007px;top:129px;width:240px;height:25px;background:linear-gradient(180deg,#afcbe6,#89aed3)"></div>
<div class="t" style="left:1014px;top:135px;;letter-spacing:0.096px">Просмотр событий (Локальный)</div>
<svg class="a" style="left:1231px;top:139px" width="10" height="5" viewBox="0 0 10 5"><path d="M0 5L5 0L10 5Z" fill="#000"/></svg>
<div class="t" style="left:1038px;top:159px;;letter-spacing:-0.031px">Открыть сохраненный журнал...</div>
<div class="t" style="left:1038px;top:183px;;letter-spacing:-0.264px">Создать настраиваемое предста...</div>
<div class="t" style="left:1038px;top:207px;;letter-spacing:0.004px">Импорт настраиваемого предст...</div>
<div class="t" style="left:1038px;top:232px;;letter-spacing:0.114px">Подключиться к другому комп...</div>
<div class="t" style="left:1038px;top:257px;;letter-spacing:-1.004px">Вид</div>
<div class="t" style="left:1038px;top:282px;;letter-spacing:-0.083px">Обновить</div>
<div class="t" style="left:1038px;top:307px;;letter-spacing:-0.333px">Справка</div>
<div class="a" style="left:1012px;top:227px;width:230px;height:1px;background:#e3e3e3"></div>
<div class="a" style="left:1012px;top:252px;width:230px;height:1px;background:#e3e3e3"></div>
<div class="a" style="left:1012px;top:277px;width:230px;height:1px;background:#e3e3e3"></div>
<div class="a" style="left:1012px;top:301px;width:230px;height:1px;background:#e3e3e3"></div>
<svg class="a" style="left:1234px;top:259px" width="5" height="9" viewBox="0 0 5 9"><path d="M0 0L5 4.5L0 9Z" fill="#000"/></svg>
<svg class="a" style="left:1234px;top:309px" width="5" height="9" viewBox="0 0 5 9"><path d="M0 0L5 4.5L0 9Z" fill="#000"/></svg>
<svg class="a" style="left:1011px;top:159px" width="16" height="16" viewBox="0 0 16 16"><path d="M1.5 4.5H5L6 3H12.5V13.5H1.5Z" fill="#f0d48a" stroke="#c9a35a"/><path d="M1 14L3.5 7.5H15.5L13 14Z" fill="#f6dc9a" stroke="#c9a35a" stroke-width="0.9"/><rect x="8" y="3.6" width="2.5" height="1.2" fill="#3d8ee0"/><path d="M11 1.5H15" stroke="#3ddc50" stroke-width="1"/></svg>
<svg class="a" style="left:1013px;top:184px" width="16" height="15" viewBox="0 0 16 15"><defs><radialGradient id="sun" cx="0.45" cy="0.4" r="0.6"><stop offset="0" stop-color="#ffd23a"/><stop offset="1" stop-color="#ff8a10"/></radialGradient></defs><path d="M0.3 0.3H15.2L9.2 8.6V14.2H6.2V8.6Z" fill="#5e7c96" stroke="#34506a" stroke-width="0.7"/><path d="M7.6 9V14" stroke="#d4e6f2" stroke-width="1.2"/><path d="M10 1.6H14" stroke="#cfe2f0" stroke-width="1"/><path d="M11.5 3L9 6" stroke="#cfe2f0" stroke-width="0.8"/><path d="M4.6 -0.2L5.8 1.6L7.9 0.6L7.6 2.9L9.6 3.8L7.6 4.9L8.2 7L6 6.6L5 8.6L3.9 6.7L1.8 7.4L2.2 5.2L0 4.2L2 3L1.2 1L3.5 1.3Z" fill="url(#sun)"/></svg>
<svg class="a" style="left:1014px;top:281px" width="14" height="16" viewBox="0 0 14 16"><path d="M0.5 0.5H9.5L13.5 4.5V15.5H0.5Z" fill="#fff" stroke="#7a7a7a"/><path d="M9.5 0.5V4.5H13.5" fill="#eee" stroke="#9a9a9a"/><path d="M10 9A3.5 3.5 0 1 1 7 5.5" stroke="#2ab83a" stroke-width="2" fill="none"/><path d="M8.5 10.5L12.5 11L11 7.5Z" fill="#2ab83a"/></svg>
<svg class="a" style="left:1013px;top:306px" width="13" height="16" viewBox="0 0 13 16"><defs><linearGradient id="h2" x1="0" y1="0" x2="1" y2="1"><stop offset="0" stop-color="#2a56cc"/><stop offset="1" stop-color="#6a98ec"/></linearGradient></defs><rect x="0.5" y="0.5" width="12" height="15" fill="url(#h2)" stroke="#132a7a"/><rect x="1" y="1" width="2" height="14" fill="#1d3da8"/><path d="M4.6 5C4.6 2.4 10 2.3 10 5.1C10 7.3 7.4 7.6 7.4 10.2" stroke="#1a2a70" stroke-width="1.8" fill="none" opacity="0.5" transform="translate(0.6,0.6)"/><path d="M4.6 5C4.6 2.4 10 2.3 10 5.1C10 7.3 7.4 7.6 7.4 10.2" stroke="#fff" stroke-width="1.8" fill="none"/><rect x="6.4" y="11.6" width="2" height="2" fill="#fff"/></svg>
<div class="a" style="left:19px;top:784px;width:1230px;height:23px;background:#f0f0f0;border-top:1px solid #dadada"></div>
<div class="a" style="left:1028px;top:786px;width:1px;height:20px;background:#d4d4d4"></div>
<div class="a" style="left:1161px;top:786px;width:1px;height:20px;background:#d4d4d4"></div>
<div class="a" style="left:1246px;top:786px;width:1px;height:20px;background:#d4d4d4"></div>
</body></html>
